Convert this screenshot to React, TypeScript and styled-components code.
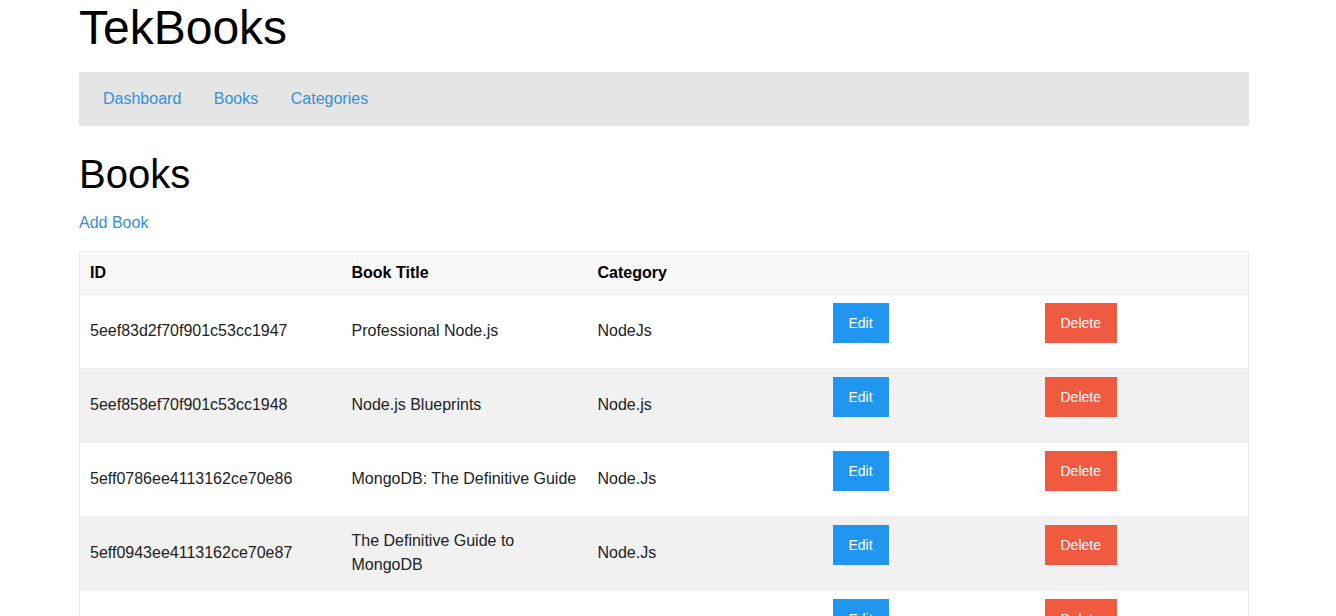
import React from "react";
import styled, { createGlobalStyle } from "styled-components";

const GlobalStyle = createGlobalStyle`
  html, body {
    margin: 0;
    padding: 0;
    background: #ffffff;
    font-family: "Liberation Sans", Arial, sans-serif;
    color: #222222;
  }
  * { box-sizing: border-box; }
`;

const Container = styled.div`
  width: 1170px;
  margin-left: 79px;
`;

const Title = styled.h1`
  margin: 0;
  font-size: 48px;
  font-weight: 400;
  line-height: 55px;
  color: #000;
`;

const NavBar = styled.nav`
  margin-top: 17px;
  height: 54px;
  background: #e5e5e5;
  display: flex;
  align-items: center;
  gap: 32.5px;
  padding: 0 24px;
`;

const Link = styled.a`
  color: #3590d9;
  font-size: 16px;
  line-height: 24px;
  text-decoration: none;
  cursor: pointer;
`;

const Heading = styled.h2`
  margin: 24px 0 0;
  font-size: 40px;
  font-weight: 400;
  line-height: 1.2;
  color: #000;
`;

const AddLink = styled(Link)`
  display: block;
  margin-top: 13px;
  width: max-content;
`;

const Table = styled.table`
  margin-top: 16px;
  width: 1170px;
  table-layout: fixed;
  border-collapse: collapse;
  border: 1px solid #eeeeee;
  font-size: 16px;
  line-height: 24px;
`;

const Th = styled.th<{ $w?: number }>`
  ${(p) => (p.$w ? `width: ${p.$w}px;` : "")}
  text-align: left;
  font-weight: 700;
  padding: 9px 10px 9px;
  color: #000;
  background: #f8f8f8;
  border-bottom: 1px solid #ebebeb;
`;

const Row = styled.tr<{ $alt: boolean }>`
  background: ${(p) => (p.$alt ? "#f1f1f1" : "#ffffff")};
  border-top: 1px solid #eeeeee;
`;

const Td = styled.td`
  padding: 7px 6px 9px 10px;
  vertical-align: middle;
  color: #222222;
`;

const ActionTd = styled.td`
  padding: 8px 10px;
  vertical-align: top;
`;

const Button = styled.button<{ $variant: "edit" | "delete" }>`
  display: block;
  height: 40px;
  margin: 0 0 17px;
  padding: 0 16px;
  border: none;
  border-radius: 0;
  font-family: "Liberation Sans", Arial, sans-serif;
  font-size: 14px;
  color: #ffffff;
  background: ${(p) => (p.$variant === "edit" ? "#2196f0" : "#f05a40")};
  cursor: pointer;
`;

const books = [
  { id: "5eef83d2f70f901c53cc1947", title: "Professional Node.js", category: "NodeJs" },
  { id: "5eef858ef70f901c53cc1948", title: "Node.js Blueprints", category: "Node.js" },
  { id: "5eff0786ee4113162ce70e86", title: "MongoDB: The Definitive Guide", category: "Node.Js" },
  { id: "5eff0943ee4113162ce70e87", title: "The Definitive Guide to MongoDB", category: "Node.Js" },
  { id: "5eff0a1bee4113162ce70e88", title: "Mastering Node.js", category: "Node.Js" },
];

export default function App() {
  return (
    <>
      <GlobalStyle />
      <Container>
        <Title>TekBooks</Title>
        <NavBar>
          <Link>Dashboard</Link>
          <Link>Books</Link>
          <Link>Categories</Link>
        </NavBar>
        <Heading>Books</Heading>
        <AddLink>Add Book</AddLink>
        <Table>
          <thead>
            <tr>
              <Th $w={262}>ID</Th>
              <Th $w={246}>Book Title</Th>
              <Th $w={235}>Category</Th>
              <Th $w={212}></Th>
              <Th></Th>
            </tr>
          </thead>
          <tbody>
            {books.map((b, i) => (
              <Row key={b.id} $alt={i % 2 === 1}>
                <Td>{b.id}</Td>
                <Td>{b.title}</Td>
                <Td>{b.category}</Td>
                <ActionTd>
                  <Button $variant="edit">Edit</Button>
                </ActionTd>
                <ActionTd>
                  <Button $variant="delete">Delete</Button>
                </ActionTd>
              </Row>
            ))}
          </tbody>
        </Table>
      </Container>
    </>
  );
}
